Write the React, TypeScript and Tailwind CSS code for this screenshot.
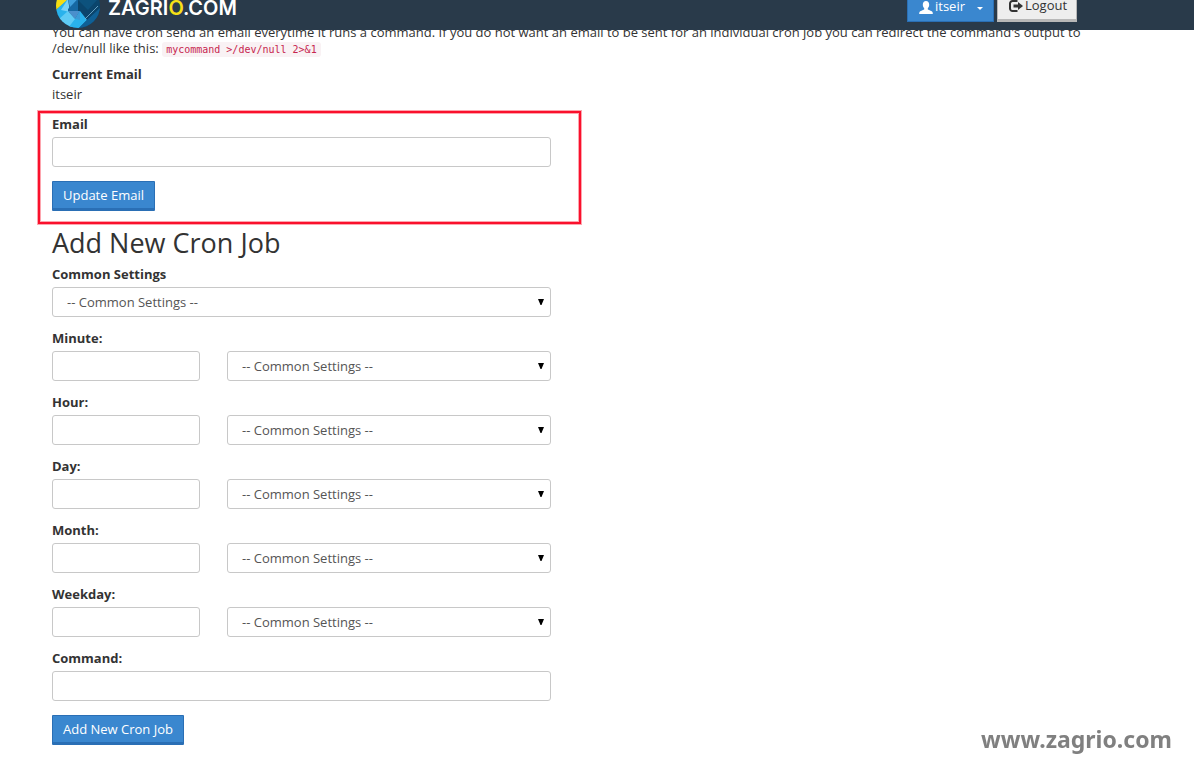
import React from 'react';
import clsx from 'clsx';

const labelClass = 'mb-1 block font-bold leading-[18px] text-[#333333]';
const controlClass = 'h-[30px] w-full rounded-[3px] border border-[#c8c8c8] bg-white px-3';

const scheduleFields = ['Minute', 'Hour', 'Day', 'Month', 'Weekday'];

interface SelectProps {
  id: string;
  label?: string;
}

function CommonSelect({ id, label }: SelectProps) {
  return (
    <div className="relative flex-1">
      <select
        id={id}
        aria-label={label}
        className={clsx(controlClass, 'block appearance-none pl-[14px] pt-px text-[#555555]')}
      >
        <option>-- Common Settings --</option>
      </select>
      <svg
        viewBox="0 0 6 6"
        className="pointer-events-none absolute right-[7px] top-3 h-[6px] w-[6px]"
        fill="#000"
        aria-hidden="true"
      >
        <path d="M0 0h6L3.500 6h-1z" />
      </svg>
    </div>
  );
}

function TextField({ id, label, type = 'text' }: { id: string; label: string; type?: string }) {
  return (
    <div>
      <label htmlFor={id} className={labelClass}>
        {label}
      </label>
      <input id={id} type={type} className={clsx(controlClass, 'block')} />
    </div>
  );
}

function PrimaryButton({ children }: { children: React.ReactNode }) {
  return (
    <button
      type="submit"
      className="block h-[30px] rounded-[1px] border border-b-[3px] border-[#2a6fb5] bg-[#3a87cf] px-[10px] pt-[2px] text-white"
    >
      {children}
    </button>
  );
}

function LogoMark() {
  return (
    <svg viewBox="0 0 44 44" className="h-11 w-11" aria-hidden="true">
      <defs>
        <clipPath id="disc">
          <circle cx="22" cy="22" r="22" />
        </clipPath>
      </defs>
      <g clipPath="url(#disc)">
        <path fill="#0b456c" d="M0 0h44v44H0z" />
        <path fill="#0d527d" d="M22 16l9-9 10 9-9 10z" />
        <path fill="#f7dd10" d="M0 0h22v12l-5 5-4-2L0 26z" />
        <path fill="#29b2ec" d="M0 26l12-11v13L6 36H0z" />
        <path fill="#7ad3f8" d="M12 15l2 13-9-2z" />
        <path fill="#3f9fdc" d="M12 15h10l-8 9z" />
        <path fill="#1668a3" d="M22 15v13H12v-3z" />
        <path fill="#4a8fcc" d="M12 27h12l-5 8z" />
        <path fill="#5fcbf5" d="M12 27l8 9-5 8H8L3 35z" />
        <path fill="#1d83c4" d="M24 27v9h-5z" />
        <path fill="#29b2ec" d="M24 27l7 9-8 8H12l7-9z" />
        <path fill="#3c9bd6" d="M19 35l5-8v9z" />
        <path fill="#0f6096" d="M31 36l13-12v20H23z" />
        <path stroke="#7fb6d6" strokeWidth="0.800" d="M29 35L42 22" />
      </g>
    </svg>
  );
}

function Header() {
  return (
    <header className="fixed inset-x-0 top-0 z-10 h-[30px] overflow-hidden bg-[#293a4a]">
      <div className="-mt-4 flex items-start justify-between pl-14 pr-[117px]">
        <a href="#" className="flex items-center gap-2 text-white">
          <LogoMark />
          <span className="mt-1 font-[Inter] text-[20px] font-semibold leading-6">
            ZAGRI<span className="text-[#f7e017]">O</span>.COM
          </span>
        </a>
        <div className="flex items-start gap-[3px] pt-2">
          <button
            type="button"
            className="flex h-[30px] w-[87px] items-center border border-[#2a6fb5] bg-[#3a87cf] pl-[11px] text-white"
          >
            <svg viewBox="0 0 14 13" className="mr-[2px] h-[13px] w-[14px]" fill="currentColor" aria-hidden="true">
              <path d="M7 0c2 0 3.200 1.500 3.200 3.700 0 1.500-.6 2.700-1.400 3.500v1.200c1.500.8 4.200 1.500 4.700 2.600.3.600.3 1.300.3 2H.2c0-.7 0-1.400.3-2C1 9.900 3.700 9.200 5.200 8.400V7.200c-.8-.8-1.400-2-1.400-3.500C3.800 1.500 5 0 7 0z" />
            </svg>
            itseir
            <svg viewBox="0 0 6 3" className="ml-3 mt-[3px] h-[3px] w-[6px]" fill="currentColor" aria-hidden="true">
              <path d="M0 0h6L3 3z" />
            </svg>
          </button>
          <button
            type="button"
            className="flex h-[30px] w-20 items-center gap-[2px] border border-b-[3px] border-[#b8b8b8] bg-[#eeeeee] pl-[11px] text-[#333333]"
          >
            <svg viewBox="0 0 14 12" className="h-3 w-[14px]" aria-hidden="true">
              <path d="M8.500 1H3.500A2.500 2.500 0 001 3.500v5A2.500 2.500 0 003.500 11h5" fill="none" stroke="currentColor" strokeWidth="2" />
              <path d="M9 2l5 4-5 4V7.500H4.500v-3H9z" fill="currentColor" />
            </svg>
            Logout
          </button>
        </div>
      </div>
    </header>
  );
}

export default function App() {
  return (
    <div className="min-h-screen bg-white font-['Open_Sans',sans-serif] text-[13px] text-[#333333]">
      <Header />

      <main className="px-[52px] pb-3 pt-6">
        <p className="mb-[6px] max-w-[1040px] leading-4">
          You can have cron send an email everytime it runs a command. If you do not want an email to be sent for an
          individual cron job you can redirect the command&apos;s output to /dev/null like this:{' '}
          <code className="rounded-[3px] bg-[#f9f2f4] px-1 py-[2px] font-['DejaVu_Sans_Mono',monospace] text-[10px] text-[#c7254e]">
            mycommand &gt;/dev/null 2&gt;&amp;1
          </code>
        </p>

        <h2 className="font-bold leading-5">Current Email</h2>
        <p className="mb-[7px] leading-5">itseir</p>

        {/* Email form, marked out in red */}
        <form className="-ml-[14px] max-w-[543px] border-2 border-[#fa102c] pb-[11px] pl-3 pr-7 pt-[2px] ring-1 ring-[#fda5ae] inset-ring-1 inset-ring-[#fda5ae]">
          <div className="mb-[14px]">
            <TextField id="email" label="Email" type="email" />
          </div>
          <PrimaryButton>Update Email</PrimaryButton>
        </form>

        <h1 className="mb-[5px] mt-[2px] text-[27px] leading-[34px]">Add New Cron Job</h1>

        <form>
          <div className="mb-[14px] flex max-w-[499px] flex-col gap-3">
            <div>
              <label htmlFor="common" className={labelClass}>
                Common Settings
              </label>
              <CommonSelect id="common" />
            </div>

            {scheduleFields.map((name) => (
              <div key={name} className="flex items-end gap-[27px]">
                <div className="w-[148px]">
                  <TextField id={name.toLowerCase()} label={`${name}:`} />
                </div>
                <CommonSelect id={`${name.toLowerCase()}-preset`} label={`${name} common settings`} />
              </div>
            ))}

            <TextField id="command" label="Command:" />
          </div>

          <PrimaryButton>Add New Cron Job</PrimaryButton>
        </form>
      </main>

      <div className="fixed bottom-[5px] right-[22px] font-['Noto_Sans',sans-serif] text-[23px] font-bold leading-8 text-[#808080]">
        www.zagrio.com
      </div>
    </div>
  );
}
